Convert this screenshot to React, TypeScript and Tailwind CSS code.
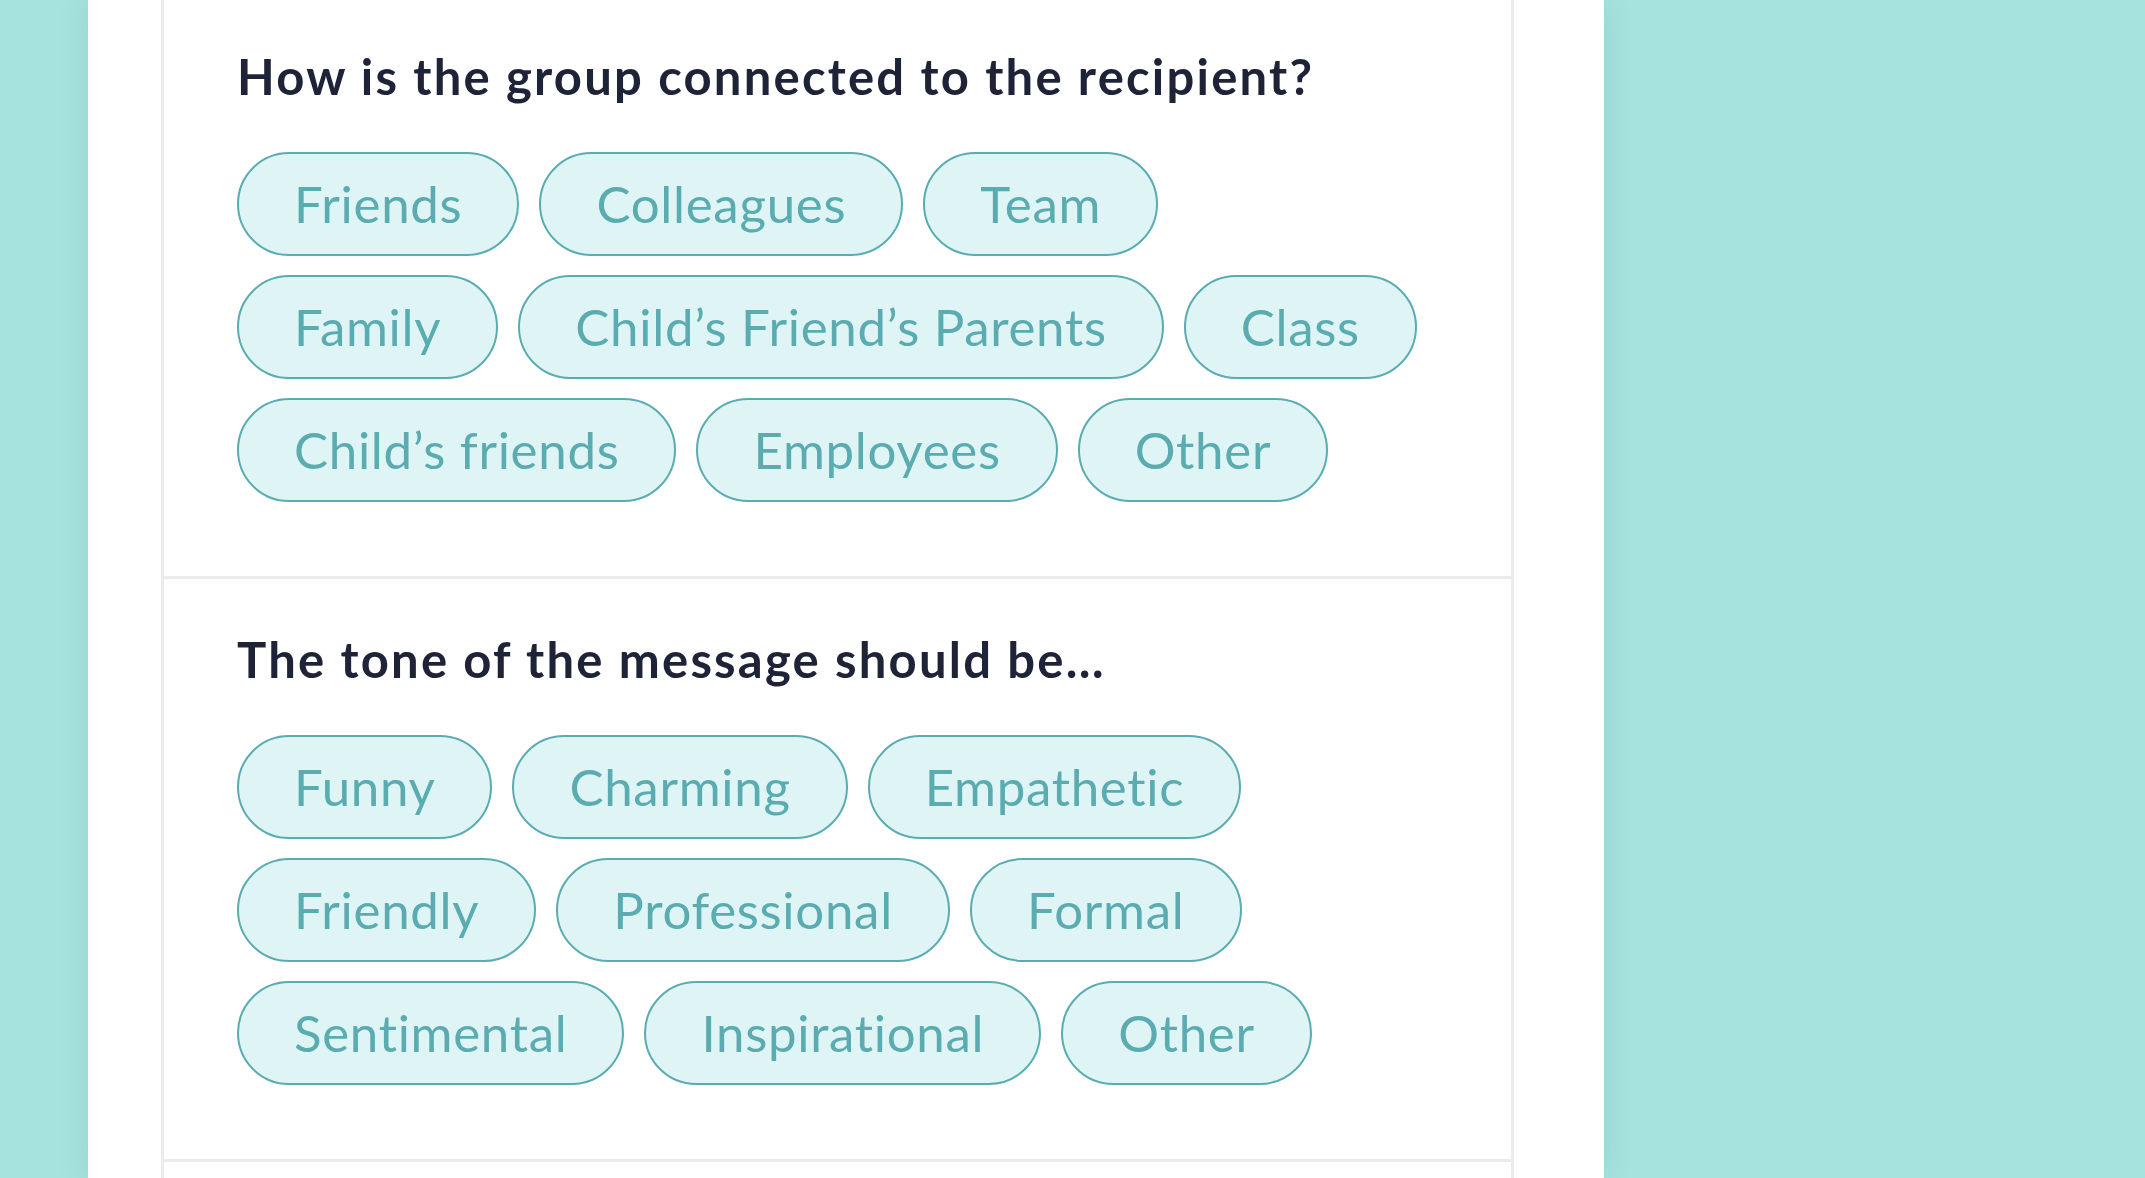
import React from "react";

const groups: { title: string; rows: string[][] }[] = [
  {
    title: "How is the group connected to the recipient?",
    rows: [
      ["Friends", "Colleagues", "Team"],
      ["Family", "Child’s Friend’s Parents", "Class"],
      ["Child’s friends", "Employees", "Other"],
    ],
  },
  {
    title: "The tone of the message should be…",
    rows: [
      ["Funny", "Charming", "Empathetic"],
      ["Friendly", "Professional", "Formal"],
      ["Sentimental", "Inspirational", "Other"],
    ],
  },
];

function Chip({ label }: { label: string }) {
  return (
    <button
      type="button"
      className="inline-flex h-[104px] items-center rounded-full border-2 border-[#5aacb1] bg-[#dff4f5] px-[55px] text-[51px] leading-[60px] tracking-[0.7px] text-[#5aacb1] whitespace-nowrap"
      style={{ fontFamily: "Lato, 'Noto Sans', sans-serif" }}
    >
      {label}
    </button>
  );
}

function Section({ title, rows, first }: { title: string; rows: string[][]; first?: boolean }) {
  return (
    <section
      className={`border-b-[3px] border-[#ebebeb] pl-[73px] pb-[74px] ${first ? "pt-[46px]" : "pt-[50px]"}`}
    >
      <h2
        className="mb-[46px] text-[49px] font-bold leading-[60px] tracking-[2.2px] text-[#1e2337]"
        style={{ fontFamily: "Lato, 'Noto Sans', sans-serif" }}
      >
        {title}
      </h2>
      <div className="flex flex-col gap-[19px]">
        {rows.map((row, i) => (
          <div key={i} className="flex gap-[20px]">
            {row.map((label) => (
              <Chip key={label} label={label} />
            ))}
          </div>
        ))}
      </div>
    </section>
  );
}

export default function App() {
  return (
    <div className="flex h-[1178px] w-full overflow-hidden bg-[#a6e2de]">
      <div className="ml-[88px] h-full w-[1516px] bg-white pl-[73px] pr-[90px] shadow-[0_0_30px_rgba(40,110,110,0.12)]">
        <div className="h-full border-x-[3px] border-[#ebebeb]">
          {groups.map((g, i) => (
            <Section key={g.title} title={g.title} rows={g.rows} first={i === 0} />
          ))}
        </div>
      </div>
    </div>
  );
}
